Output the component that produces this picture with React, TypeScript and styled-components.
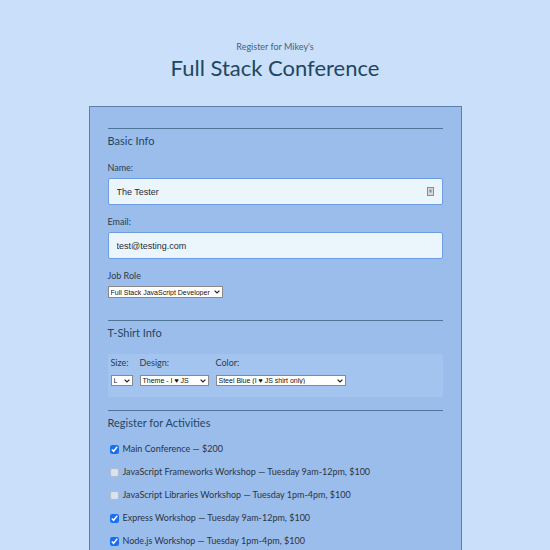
import React from "react";
import styled, { createGlobalStyle } from "styled-components";

const Global = createGlobalStyle`
  html, body { margin: 0; padding: 0; }
  body {
    background: #cadff9;
    font-family: "Lato", "Noto Sans", sans-serif;
    color: #2b3b4c;
    height: 550px;
    overflow: hidden;
  }
`;

const Page = styled.div`
  display: flex;
  flex-direction: column;
  align-items: center;
`;

const Header = styled.header`
  display: flex;
  flex-direction: column;
  align-items: center;
  padding-top: 41px;
  height: 65px;
`;

const Subtitle = styled.div`
  font-size: 9px;
  line-height: 12px;
  color: #3e6582;
`;

const Title = styled.h1`
  margin: 2px 0 0;
  font-size: 22px;
  line-height: 26px;
  font-weight: 400;
  color: #21475f;
`;

const Form = styled.form`
  width: 373px;
  box-sizing: border-box;
  background: #9bbdec;
  border: 1px solid #5a80ab;
  padding: 21px 18px 40px;
`;

const Section = styled.fieldset`
  margin: 0;
  padding: 0;
  border: none;
  border-top: 1px solid #4d7699;
`;

const Heading = styled.legend`
  float: left;
  width: 100%;
  padding: 0;
  margin: 5px 0 0;
  font-size: 11px;
  line-height: 14px;
  color: #1f4763;
`;

const Body = styled.div<{ $pb: number }>`
  clear: both;
  display: flex;
  flex-direction: column;
  align-items: flex-start;
  padding-bottom: ${(p) => p.$pb}px;
`;

const Label = styled.label<{ $mt?: number }>`
  display: block;
  font-size: 9px;
  line-height: 12px;
  margin-top: ${(p) => p.$mt ?? 10}px;
  margin-bottom: 4px;
  color: #2d3c4d;
`;

const InputWrap = styled.div`
  position: relative;
  width: 100%;
`;

const TextInput = styled.input`
  box-sizing: border-box;
  width: 100%;
  height: 27px;
  margin: 0;
  padding: 0 8px;
  background: #eaf6fc;
  border: 1px solid #6d9de0;
  border-radius: 2px;
  font-family: "Liberation Sans", Arial, sans-serif;
  font-size: 9px;
  color: #1e2a36;
  outline: none;
`;

const FillIcon = styled.svg`
  position: absolute;
  right: 9px;
  top: 9px;
  width: 7px;
  height: 9px;
`;

const SelectWrap = styled.div<{ $w: number; $h: number }>`
  position: relative;
  display: block;
  width: ${(p) => p.$w}px;
  height: ${(p) => p.$h}px;
`;

const NativeSelect = styled.select`
  appearance: none;
  -webkit-appearance: none;
  display: block;
  box-sizing: border-box;
  width: 100%;
  height: 100%;
  margin: 0;
  padding: 0 10px 0 2px;
  background: #ffffff;
  border: 1px solid #8a8a8a;
  border-radius: 0;
  font-family: "Liberation Sans", Arial, sans-serif;
  font-size: 7px;
  line-height: 1;
  color: #111;
  outline: none;
`;

const Chevron = styled.svg`
  position: absolute;
  right: 3px;
  top: 50%;
  width: 6px;
  height: 4px;
  margin-top: -2px;
  pointer-events: none;
`;

const ShirtBox = styled.div`
  align-self: stretch;
  margin-top: 14px;
  background: #a4c4f0;
  border-radius: 2px;
  padding: 2px 3px 11px;
  display: flex;
  gap: 7px;
`;

const ShirtCol = styled.div`
  display: flex;
  flex-direction: column;
`;

const ShirtLabel = styled.span`
  font-size: 9px;
  line-height: 12px;
  margin-top: 1px;
  margin-bottom: 6px;
  color: #2d3c4d;
`;

const Activities = styled.div`
  display: flex;
  flex-direction: column;
  gap: 11px;
  margin-top: 13px;
`;

const Activity = styled.label`
  display: flex;
  align-items: center;
  gap: 4px;
  padding-left: 2px;
  font-size: 9px;
  line-height: 12px;
  color: #2d3440;
`;

const Check = styled.input`
  width: 9px;
  height: 9px;
  margin: 0;
  accent-color: #1a6ef0;
`;

function Select({ w, h, value, options }: { w: number; h: number; value: string; options: string[] }) {
  return (
    <SelectWrap $w={w} $h={h}>
      <NativeSelect defaultValue={value}>
        {options.map((o) => (
          <option key={o}>{o}</option>
        ))}
      </NativeSelect>
      <Chevron viewBox="0 0 6 4">
        <path d="M0.6 0.6 L3 3 L5.4 0.6" fill="none" stroke="#222" strokeWidth="1.2" />
      </Chevron>
    </SelectWrap>
  );
}

const activities: { text: string; checked: boolean }[] = [
  { text: "Main Conference — $200", checked: true },
  { text: "JavaScript Frameworks Workshop — Tuesday 9am-12pm, $100", checked: false },
  { text: "JavaScript Libraries Workshop — Tuesday 1pm-4pm, $100", checked: false },
  { text: "Express Workshop — Tuesday 9am-12pm, $100", checked: true },
  { text: "Node.js Workshop — Tuesday 1pm-4pm, $100", checked: true },
];

export default function App() {
  return (
    <Page>
      <Global />
      <Header>
        <Subtitle>Register for Mikey's</Subtitle>
        <Title>Full Stack Conference</Title>
      </Header>
      <Form onSubmit={(e) => e.preventDefault()}>
        <Section>
          <Heading>Basic Info</Heading>
          <Body $pb={22}>
            <Label $mt={14}>Name:</Label>
            <InputWrap>
              <TextInput defaultValue="The Tester" />
              <FillIcon viewBox="0 0 7 9">
                <rect x="0.5" y="0.5" width="6" height="8" fill="#d8d8d8" stroke="#8c8c8c" />
                <rect x="2.5" y="2.5" width="2" height="3" fill="#8c8c8c" />
              </FillIcon>
            </InputWrap>
            <Label $mt={11}>Email:</Label>
            <InputWrap>
              <TextInput defaultValue="test@testing.com" />
            </InputWrap>
            <Label $mt={11}>Job Role</Label>
            <Select w={115} h={12} value="Full Stack JavaScript Developer" options={["Full Stack JavaScript Developer"]} />
          </Body>
        </Section>
        <Section>
          <Heading>T-Shirt Info</Heading>
          <Body $pb={13}>
            <ShirtBox>
              <ShirtCol>
                <ShirtLabel>Size:</ShirtLabel>
                <Select w={22} h={11} value="L" options={["S", "M", "L", "XL"]} />
              </ShirtCol>
              <ShirtCol>
                <ShirtLabel>Design:</ShirtLabel>
                <Select w={69} h={11} value="Theme - I ♥ JS" options={["Theme - JS Puns", "Theme - I ♥ JS"]} />
              </ShirtCol>
              <ShirtCol>
                <ShirtLabel>Color:</ShirtLabel>
                <Select w={130} h={11} value="Steel Blue (I ♥ JS shirt only)" options={["Steel Blue (I ♥ JS shirt only)"]} />
              </ShirtCol>
            </ShirtBox>
          </Body>
        </Section>
        <Section>
          <Heading>Register for Activities</Heading>
          <Body $pb={10}>
            <Activities>
              {activities.map((a) => (
                <Activity key={a.text}>
                  <Check type="checkbox" defaultChecked={a.checked} disabled={!a.checked && a.text.includes("JavaScript")} />
                  {a.text}
                </Activity>
              ))}
            </Activities>
          </Body>
        </Section>
      </Form>
    </Page>
  );
}
